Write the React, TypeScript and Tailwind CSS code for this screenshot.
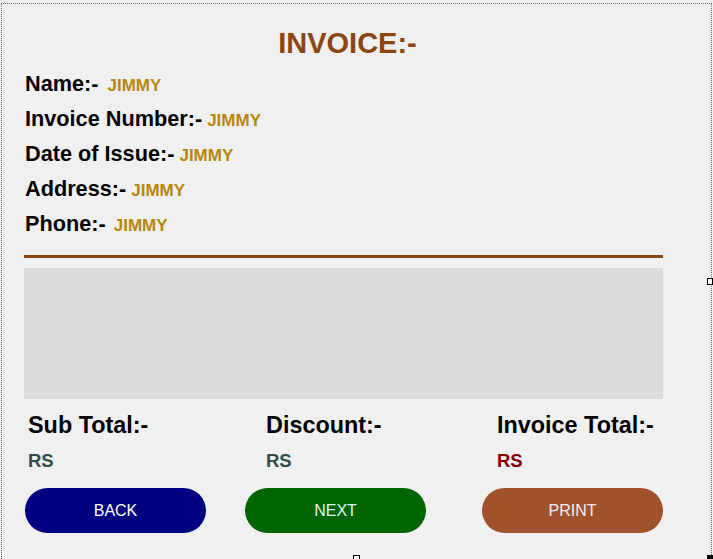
import React from "react";

const font = { fontFamily: '"Liberation Sans", Arial, sans-serif' };

const fields = [
    { label: "Name:-", gap: "ml-[9px]" },
    { label: "Invoice Number:-", gap: "ml-[5px]" },
    { label: "Date of Issue:-", gap: "ml-[5px]" },
    { label: "Address:-", gap: "ml-[5px]" },
    { label: "Phone:-", gap: "ml-[8px]" },
];

export default function App() {
    return (
        <div className="relative w-[713px] h-[559px] overflow-hidden bg-[#f0f0f0]" style={font}>
            {/* designer form frame */}
            <div className="ml-[1px] mt-[3px] w-[711px] h-[600px] border border-dotted border-[#6a6a6a] border-b-0">
                <div className="ml-[22px] w-[639px] flex flex-col">
                    <h1 className="mt-[21px] h-[36px] leading-[36px] pl-[8px] text-center text-[29px] font-bold text-[#8b4513]">
                        INVOICE:-
                    </h1>

                    <div className="mt-[5px] flex flex-col">
                        {fields.map((f) => (
                            <div key={f.label} className="h-[35px] leading-[35px] pl-[1px] flex items-baseline">
                                <span className="text-[21.7px] font-bold text-black">{f.label}</span>
                                <span className={`${f.gap} text-[17px] font-bold text-[#b8860b]`}>JIMMY</span>
                            </div>
                        ))}
                    </div>

                    <div className="mt-[14px] h-[3px] bg-[#8b4513]" />

                    <div className="mt-[10px] h-[131px] bg-[#dcdcdc]" />

                    <div className="mt-[12px] pl-[4px] flex h-[28px] leading-[28px] text-[23.4px] font-bold text-black">
                        <div className="w-[238px]">Sub Total:-</div>
                        <div className="w-[231px]">Discount:-</div>
                        <div>Invoice Total:-</div>
                    </div>

                    <div className="mt-[10px] pl-[4px] flex h-[24px] leading-[24px] text-[18.5px] font-bold">
                        <div className="w-[238px] text-[#2f4f4f]">RS</div>
                        <div className="w-[231px] text-[#2f4f4f]">RS</div>
                        <div className="text-[#800000]">RS</div>
                    </div>

                    <div className="mt-[15px] flex">
                        <button className="ml-[1px] w-[181px] h-[45px] rounded-full bg-[#000080] text-white text-[16px]">
                            BACK
                        </button>
                        <button className="ml-[39px] w-[181px] h-[45px] rounded-full bg-[#006400] text-[#dff7ff] text-[16px]">
                            NEXT
                        </button>
                        <button className="ml-[56px] w-[181px] h-[45px] rounded-full bg-[#a0522d] text-[#f3ecf6] text-[16px]">
                            PRINT
                        </button>
                    </div>
                </div>
            </div>

            {/* resize grips */}
            <div className="absolute left-[707px] top-[278px] w-[6px] h-[7px] bg-white border border-black" />
            <div className="absolute left-[353px] top-[555px] w-[7px] h-[6px] bg-white border border-black" />
            <div className="absolute left-[707px] top-[555px] w-[7px] h-[6px] bg-black" />
        </div>
    );
}
